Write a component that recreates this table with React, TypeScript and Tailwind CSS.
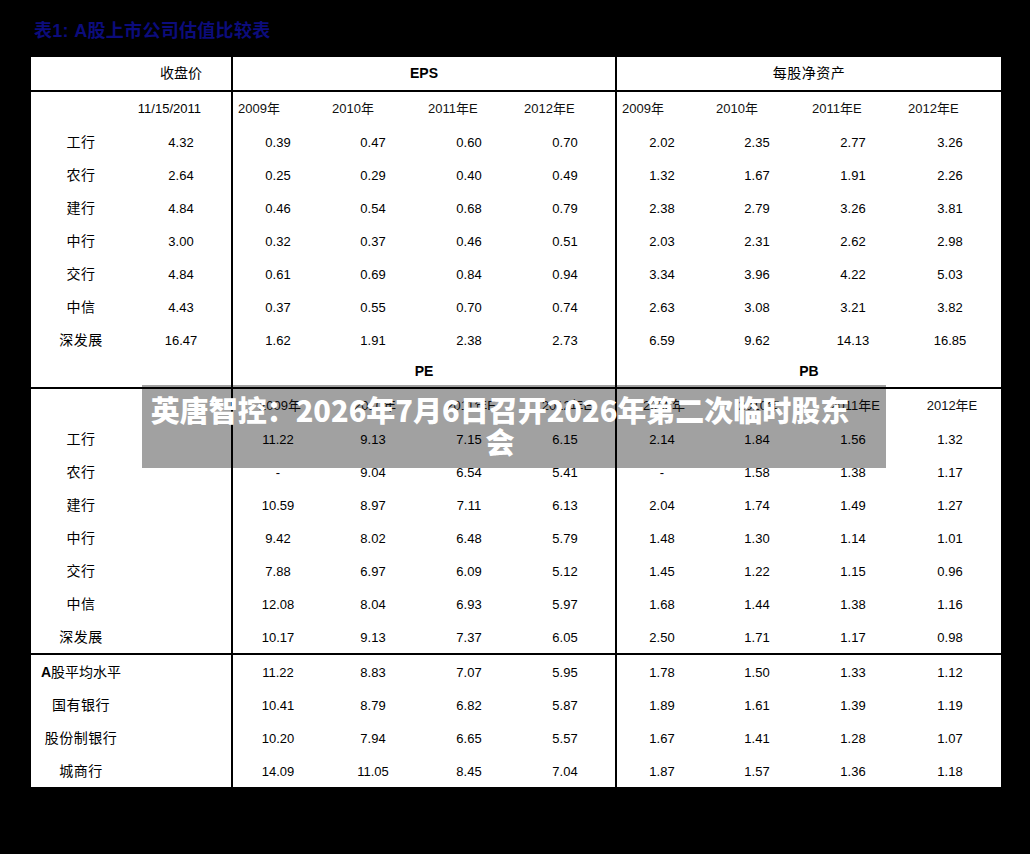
import React from "react";

const num = "font-['Liberation_Sans',Arial,sans-serif]";
const cjk = "font-['Liberation_Sans','Noto_Sans_CJK_SC',sans-serif]";

const YEARS = ["2009年", "2010年", "2011年E", "2012年E"];

type Row = { name: string; price?: string; a: string[]; b: string[] };

const TOP: Row[] = [
  { name: "工行", price: "4.32", a: ["0.39", "0.47", "0.60", "0.70"], b: ["2.02", "2.35", "2.77", "3.26"] },
  { name: "农行", price: "2.64", a: ["0.25", "0.29", "0.40", "0.49"], b: ["1.32", "1.67", "1.91", "2.26"] },
  { name: "建行", price: "4.84", a: ["0.46", "0.54", "0.68", "0.79"], b: ["2.38", "2.79", "3.26", "3.81"] },
  { name: "中行", price: "3.00", a: ["0.32", "0.37", "0.46", "0.51"], b: ["2.03", "2.31", "2.62", "2.98"] },
  { name: "交行", price: "4.84", a: ["0.61", "0.69", "0.84", "0.94"], b: ["3.34", "3.96", "4.22", "5.03"] },
  { name: "中信", price: "4.43", a: ["0.37", "0.55", "0.70", "0.74"], b: ["2.63", "3.08", "3.21", "3.82"] },
  { name: "深发展", price: "16.47", a: ["1.62", "1.91", "2.38", "2.73"], b: ["6.59", "9.62", "14.13", "16.85"] },
];

const BANKS: Row[] = [
  { name: "工行", a: ["11.22", "9.13", "7.15", "6.15"], b: ["2.14", "1.84", "1.56", "1.32"] },
  { name: "农行", a: ["-", "9.04", "6.54", "5.41"], b: ["-", "1.58", "1.38", "1.17"] },
  { name: "建行", a: ["10.59", "8.97", "7.11", "6.13"], b: ["2.04", "1.74", "1.49", "1.27"] },
  { name: "中行", a: ["9.42", "8.02", "6.48", "5.79"], b: ["1.48", "1.30", "1.14", "1.01"] },
  { name: "交行", a: ["7.88", "6.97", "6.09", "5.12"], b: ["1.45", "1.22", "1.15", "0.96"] },
  { name: "中信", a: ["12.08", "8.04", "6.93", "5.97"], b: ["1.68", "1.44", "1.38", "1.16"] },
  { name: "深发展", a: ["10.17", "9.13", "7.37", "6.05"], b: ["2.50", "1.71", "1.17", "0.98"] },
];

const SECTORS: Row[] = [
  { name: "A股平均水平", a: ["11.22", "8.83", "7.07", "5.95"], b: ["1.78", "1.50", "1.33", "1.12"] },
  { name: "国有银行", a: ["10.41", "8.79", "6.82", "5.87"], b: ["1.89", "1.61", "1.39", "1.19"] },
  { name: "股份制银行", a: ["10.20", "7.94", "6.65", "5.57"], b: ["1.67", "1.41", "1.28", "1.07"] },
  { name: "城商行", a: ["14.09", "11.05", "8.45", "7.04"], b: ["1.87", "1.57", "1.36", "1.18"] },
];

const grid = "grid grid-cols-[100px_100px_96px_96px_96px_96px_96px_96px_96px_98px] items-center";

function Label({ name }: { name: string }) {
  if (name.startsWith("A")) {
    return (
      <div className={`pt-[2px] text-center text-[14px] ${cjk}`}>
        <span className="font-bold">A</span>
        {name.slice(1)}
      </div>
    );
  }
  return <div className={`pt-[2px] text-center text-[14px] tracking-[0.5px] ${cjk}`}>{name}</div>;
}

function Cells({ values }: { values: string[] }) {
  return (
    <>
      {values.map((v, i) => (
        <div
          key={i}
          className={`flex h-full items-center justify-center pr-1 pt-[2px] text-[13px] ${num} ${i === 0 ? "border-l-2 border-black" : ""}`}
        >
          {v}
        </div>
      ))}
    </>
  );
}

function DataRow({ row, last }: { row: Row; last?: boolean }) {
  return (
    <div className={`${grid} ${last ? "h-[35px] border-b-2 border-black" : "h-[33px]"}`}>
      <Label name={row.name} />
      <div className={`pt-[2px] text-center text-[13px] ${num}`}>{row.price ?? ""}</div>
      <Cells values={row.a} />
      <Cells values={row.b} />
    </div>
  );
}

function YearCells({ centered }: { centered?: boolean }) {
  return (
    <>
      {YEARS.map((y, i) => (
        <div
          key={i}
          className={`flex h-full items-center text-[13px] text-[#111] ${cjk} ${
            centered ? "justify-center" : "pl-[5px]"
          } ${i === 0 ? "border-l-2 border-black" : ""}`}
        >
          {y}
        </div>
      ))}
    </>
  );
}

export default function App() {
  return (
    <div className="relative h-[854px] w-[1030px] overflow-hidden bg-black text-black">
      <div className={`h-[57px] pl-[34px] pt-[22px] text-[18px] font-bold leading-[18px] tracking-[0.3px] text-[#0c0c7c] ${cjk}`}>
        表1: A股上市公司估值比较表
      </div>

      <div className="ml-[31px] w-[970px] bg-white">
        {/* header */}
        <div className={`${grid} h-[35px] border-b-2 border-black`}>
          <div />
          <div className={`text-center text-[14px] ${cjk}`}>收盘价</div>
          <div className={`col-span-4 flex h-full items-center justify-center border-l-2 border-black text-[14px] font-bold ${num}`}>
            EPS
          </div>
          <div className={`col-span-4 flex h-full items-center justify-center border-l-2 border-black text-[14px] tracking-[0.5px] ${cjk}`}>
            每股净资产
          </div>
        </div>
        <div className={`${grid} h-[33px]`}>
          <div />
          <div className={`pr-[30px] text-right text-[13px] ${num}`}>11/15/2011</div>
          <YearCells />
          <YearCells />
        </div>
        {TOP.map((r) => (
          <DataRow key={r.name} row={r} />
        ))}

        {/* PE / PB */}
        <div className={`${grid} h-[33px] border-b-2 border-black`}>
          <div />
          <div />
          <div className={`col-span-4 flex h-full items-center justify-center border-l-2 border-black text-[14px] font-bold ${num}`}>
            PE
          </div>
          <div className={`col-span-4 flex h-full items-center justify-center border-l-2 border-black text-[14px] font-bold ${num}`}>
            PB
          </div>
        </div>
        <div className={`${grid} h-[33px]`}>
          <div />
          <div />
          <YearCells centered />
          <YearCells centered />
        </div>
        {BANKS.map((r, i) => (
          <DataRow key={r.name + "pe"} row={r} last={i === BANKS.length - 1} />
        ))}
        {SECTORS.map((r) => (
          <DataRow key={r.name} row={r} />
        ))}
      </div>

      <div className="absolute left-[142px] top-[385px] h-[83px] w-[744px] bg-black/[0.37] pr-[28px] pt-[8px]">
        <div className="whitespace-nowrap text-center font-['Noto_Sans_CJK_SC',sans-serif] text-[29px] font-black leading-[32px] text-white">
          英唐智控：2026年7月6日召开2026年第二次临时股东
          <br />会
        </div>
      </div>
    </div>
  );
}
